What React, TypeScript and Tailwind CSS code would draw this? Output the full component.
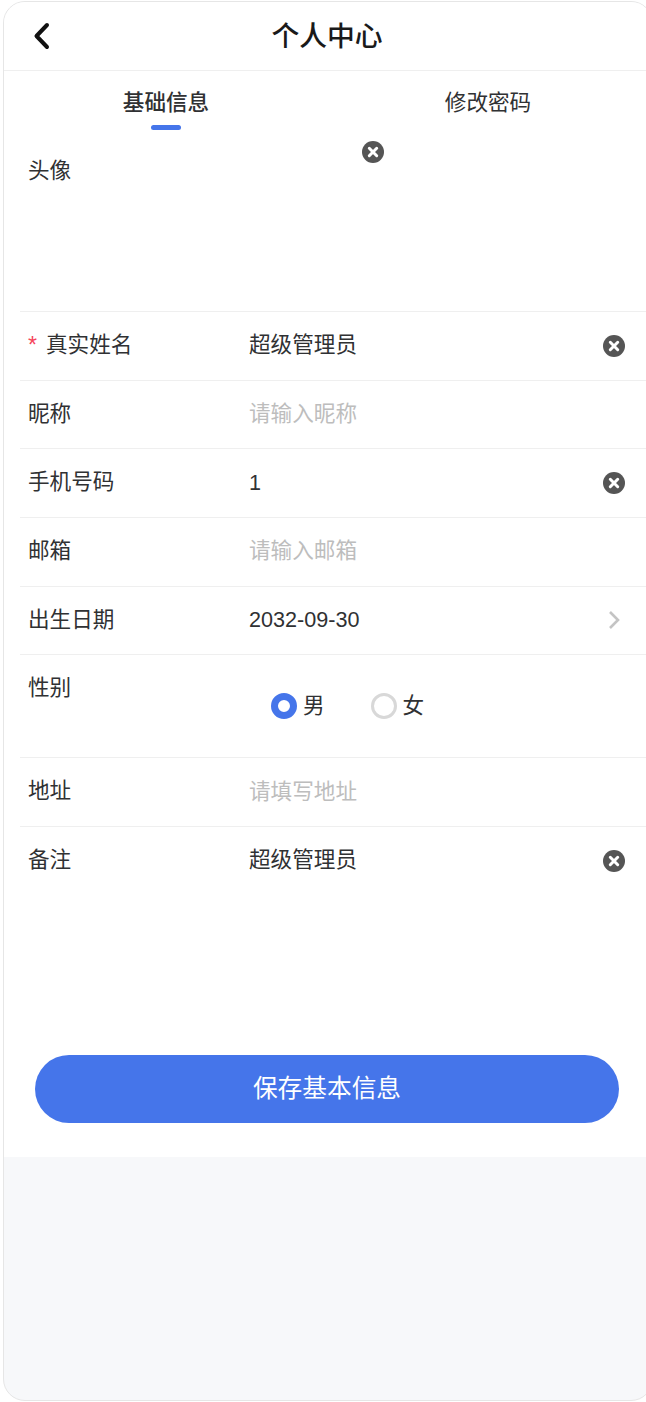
import React from 'react';

const FONT = "font-['Liberation_Sans','Noto_Sans_CJK_SC',sans-serif]";

const ClearIcon: React.FC = () => (
  <svg width="22" height="22" viewBox="0 0 22 22" className="shrink-0">
    <circle cx="11" cy="11" r="11" fill="#555555" />
    <path d="M7.3 7.3 L14.7 14.7 M14.7 7.3 L7.3 14.7" stroke="#ffffff" strokeWidth="3" strokeLinecap="round" />
  </svg>
);

interface RowProps {
  label: string;
  value?: string;
  placeholder?: string;
  required?: boolean;
  clearable?: boolean;
  arrow?: boolean;
}

const Row: React.FC<RowProps> = ({ label, value, placeholder, required, clearable, arrow }) => (
  <div className="ml-[16px] h-[68.7px] border-t border-[#efefef] pl-[8px] pr-[22px] flex items-center">
    <div className="w-[221px] shrink-0 text-[21.6px] leading-[30px] text-[#303133] flex items-center -mt-[2px]">
      {required && <span className="text-[#f5455c] w-[18px] text-[23px]">*</span>}
      {label}
    </div>
    <div className={`flex-1 -mt-[1px] text-[21.6px] leading-[30px] ${value ? 'text-[#303133]' : 'text-[#bdbdbd]'}`}>
      {value || placeholder}
    </div>
    {clearable && <ClearIcon />}
    {arrow && (
      <svg width="14" height="20" viewBox="0 0 14 20" className="mr-[4px] -mt-[1px]">
        <path d="M3 2 L11 10 L3 18" fill="none" stroke="#c4c4c4" strokeWidth="2.6" />
      </svg>
    )}
  </div>
);

export default function App() {
  return (
    <div className={`h-[1402px] w-[646px] overflow-hidden bg-white ${FONT}`}>
      <div className="h-[1400px] w-[650px] mt-[1px] ml-[3px] rounded-[22px] border border-[#e6e6e6] bg-[#f7f8fa] overflow-hidden">
        <div className="bg-white h-[1155px] w-[643px]">
          {/* Header */}
          <div className="relative h-[69px] border-b border-[#efefef] flex items-center justify-center pt-[1px] pl-[3px]">
            <svg width="20" height="30" viewBox="0 0 20 30" className="absolute left-[28px] top-[19px]">
              <path d="M15 4 L4.5 15 L15 26" fill="none" stroke="#111111" strokeWidth="4" strokeLinecap="round" strokeLinejoin="round" />
            </svg>
            <span className="text-[27.8px] font-medium text-[#1a1a1a] leading-[36px]">个人中心</span>
          </div>

          {/* Tabs */}
          <div className="flex h-[60px] pl-[1px]">
            <div className="w-[322px] shrink-0 flex flex-col items-center pt-[17px]">
              <span className="text-[21.6px] font-medium leading-[30px] text-[#303133]">基础信息</span>
              <span className="mt-[7px] h-[5px] w-[30px] rounded-full bg-[#4575ea]"></span>
            </div>
            <div className="w-[322px] shrink-0 flex flex-col items-center pt-[17px]">
              <span className="text-[21.6px] leading-[30px] text-[#303133]">修改密码</span>
            </div>
          </div>

          {/* Avatar */}
          <div className="relative h-[180px] pl-[24px] pt-[25px]">
            <span className="text-[21.6px] leading-[30px] text-[#303133]">头像</span>
            <div className="absolute left-[358px] top-[10px]">
              <ClearIcon />
            </div>
          </div>

          <Row label="真实姓名" value="超级管理员" required clearable />
          <Row label="昵称" placeholder="请输入昵称" />
          <Row label="手机号码" value="1" clearable />
          <Row label="邮箱" placeholder="请输入邮箱" />
          <Row label="出生日期" value="2032-09-30" arrow />

          {/* Gender */}
          <div className="ml-[16px] h-[103px] border-t border-[#efefef] pl-[8px] flex items-start">
            <div className="w-[243px] shrink-0 pt-[18px] text-[21.6px] leading-[30px] text-[#303133]">性别</div>
            <div className="flex items-center gap-[6px] pt-[36px]">
              <span className="h-[26px] w-[26px] rounded-full border-[7px] border-[#4575ea] bg-white"></span>
              <span className="text-[21.6px] leading-[30px] text-[#303133]">男</span>
              <span className="ml-[40px] h-[26px] w-[26px] rounded-full border-[3px] border-[#d8d8d8] bg-white"></span>
              <span className="text-[21.6px] leading-[30px] text-[#303133]">女</span>
            </div>
          </div>

          <Row label="地址" placeholder="请填写地址" />
          <Row label="备注" value="超级管理员" clearable />

          {/* Save */}
          <div className="px-[31px] pt-[160px]">
            <button className="h-[68px] w-[584px] rounded-full bg-[#4575ea] text-[24.7px] text-white">保存基本信息</button>
          </div>
        </div>
      </div>
    </div>
  );
}
